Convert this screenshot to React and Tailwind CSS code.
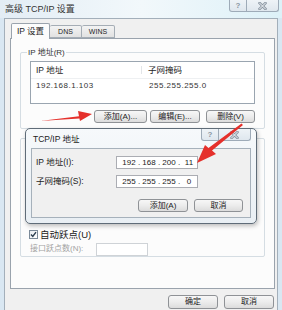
import React from "react";

const FONT = "font-['Liberation_Sans','Noto_Sans_CJK_SC',sans-serif]";

function Btn({ children, className = "" }) {
  return (
    <div
      className={`flex items-center justify-center rounded-[3px] border border-[#8f9296] bg-gradient-to-b from-[#f7f7f7] via-[#ececec] to-[#dcdcdc] text-[8px] leading-none text-[#222] ${className}`}
    >
      {children}
    </div>
  );
}

function CaptionButtons() {
  return (
    <div className="flex h-[12px]">
      <div className="flex w-[18px] items-center justify-center rounded-bl-[3px] border border-t-0 border-[#9eabb8] bg-gradient-to-b from-[#eef3f7] to-[#dfe7ee] text-[8px] font-bold leading-none text-[#8a96a2]">
        ?
      </div>
      <div className="flex w-[32px] items-center justify-center rounded-br-[3px] border border-l-0 border-t-0 border-[#9eabb8] bg-gradient-to-b from-[#eef3f7] to-[#dfe7ee]">
        <svg width="9" height="8" viewBox="0 0 9 8">
          <path d="M1.5 1 L7.5 7 M7.5 1 L1.5 7" stroke="#8a96a2" strokeWidth="2.6" strokeLinecap="square" />
          <path d="M1.5 1 L7.5 7 M7.5 1 L1.5 7" stroke="#f4f7fa" strokeWidth="1" strokeLinecap="square" />
        </svg>
      </div>
    </div>
  );
}

function GroupBox({ label, className = "", children }) {
  return (
    <div className={`relative border border-[#d5dde3] rounded-[2px] ${className}`}>
      {label && (
        <span className="absolute left-[6px] top-[-6px] bg-[#fcfcfc] px-[1px] text-[8px] leading-[11px] text-[#333]">
          {label}
        </span>
      )}
      {children}
    </div>
  );
}

function IpField({ parts }) {
  return (
    <div className="flex h-[13px] w-[82px] items-center border border-[#abadb3] bg-white pl-[5px] text-[8px] leading-none text-[#222]">
      {parts.map((p, i) => (
        <React.Fragment key={i}>
          {i > 0 && <span className="w-[6px] text-center">.</span>}
          <span className="w-[14px] text-center">{p}</span>
        </React.Fragment>
      ))}
    </div>
  );
}

export default function App() {
  return (
    <div className={`relative flex h-[310px] w-[282px] flex-col overflow-hidden bg-[#d9e7f2] ${FONT} text-[#1e1e1e]`}>
      {/* title bar */}
      <div className="flex h-[18px] items-start bg-gradient-to-r from-[#e3edf5] via-[#f2f8fb] to-[#ddf1f8]">
        <span className="pl-[5px] pt-[4px] text-[9px] leading-[10px] text-[#333]">高级 TCP/IP 设置</span>
        <div className="ml-auto mr-[3px]">
          <CaptionButtons />
        </div>
      </div>

      {/* body */}
      <div className="mx-[4px] flex flex-1 flex-col border-x border-t border-[#a3afba] bg-[#f0f0f0] pl-[5px] pr-[2px] pt-[3px]">
        {/* tabs */}
        <div className="flex h-[16px] items-end pl-[1px]">
          <div className="relative z-10 mb-[-1px] flex h-[16px] w-[39px] items-center justify-center rounded-t-[2px] border border-b-0 border-[#9aa3ad] bg-[#fcfcfc] text-[8.5px] leading-none">
            IP 设置
          </div>
          <div className="flex h-[13px] w-[32px] items-center justify-center rounded-t-[2px] border border-l-0 border-[#a5adb5] bg-gradient-to-b from-[#f3f3f3] to-[#e2e2e2] text-[7px] leading-none">
            DNS
          </div>
          <div className="flex h-[13px] w-[33px] items-center justify-center rounded-t-[2px] border border-l-0 border-[#a5adb5] bg-gradient-to-b from-[#f3f3f3] to-[#e2e2e2] text-[7px] leading-none">
            WINS
          </div>
        </div>

        {/* tab panel */}
        <div className="flex h-[251px] flex-col border border-[#9aa3ad] bg-[#fcfcfc] px-[9px] pt-[13px]">
          <GroupBox label="IP 地址(R)" className="h-[77px] px-[9px] pt-[8px]">
            <div className="h-[43px] border border-[#9aa5b0] bg-white">
              <div className="flex h-[17px] items-center border-b border-[#eef0f2] text-[8.5px] leading-none">
                <div className="w-[111px] border-r border-[#e2e5e8] pl-[5px]">IP 地址</div>
                <div className="pl-[6px]">子网掩码</div>
              </div>
              <div className="flex h-[13px] items-center text-[8px] leading-none tracking-[0.5px] text-[#333]">
                <div className="w-[111px] pl-[5px]">192.168.1.103</div>
                <div className="pl-[7px]">255.255.255.0</div>
              </div>
            </div>
            <div className="mt-[6px] flex justify-end">
              <Btn className="h-[13px] w-[53px]">添加(A)...</Btn>
              <Btn className="ml-[3px] h-[13px] w-[50px]">编辑(E)...</Btn>
              <Btn className="ml-[6px] h-[13px] w-[49px]">删除(V)</Btn>
            </div>
          </GroupBox>

          {/* gateway group, mostly covered by the dialog */}
          <GroupBox className="mt-[9px] flex h-[119px] flex-col px-[9px] pt-[8px]">
            <div className="h-[52px] border border-[#9aa5b0] bg-white" />
            <div className="h-[18px]" />
            <div className="mt-[13px] flex items-center">
              <div className="ml-[-1px] flex h-[9px] w-[9px] items-center justify-center border border-[#7b8a99] bg-gradient-to-br from-[#e8ecf0] to-white">
                <svg width="7" height="7" viewBox="0 0 7 7">
                  <path d="M1 3.6 L2.8 5.5 L6 1.2" fill="none" stroke="#2c3e50" strokeWidth="1.4" />
                </svg>
              </div>
              <span className="ml-[2px] text-[9.5px] leading-none text-[#222]">自动跃点(U)</span>
            </div>
            <div className="mt-[3px] flex items-center">
              <span className="w-[66px] text-[8px] leading-none text-[#a3a3a3]">接口跃点数(N):</span>
              <div className="h-[13px] w-[52px] border border-[#cfd3d7] bg-white" />
            </div>
          </GroupBox>
        </div>

        {/* bottom buttons */}
        <div className="mt-[6px] flex justify-end pr-[1px]">
          <Btn className="h-[14px] w-[50px] text-[8.5px]">确定</Btn>
          <Btn className="ml-[6px] h-[14px] w-[50px] text-[8.5px]">取消</Btn>
        </div>
      </div>

      {/* sub dialog */}
      <div className="absolute left-[25px] top-[128px] flex h-[96px] w-[232px] flex-col rounded-[5px] border border-[#5f6c78] bg-gradient-to-b from-[#f6f9fb] to-[#e9eff4] shadow-[1px_2px_4px_rgba(0,0,0,0.25)]">
        <div className="flex h-[19px] items-start">
          <span className="pl-[7px] pt-[5px] text-[8.5px] leading-[10px] text-[#222]">TCP/IP 地址</span>
          <div className="ml-auto mr-[5px]">
            <CaptionButtons />
          </div>
        </div>
        <div className="mx-[5px] mb-[5px] flex flex-1 flex-col border border-[#a6b1bb] bg-[#f0f0f0] pl-[4px] pr-[7px] pt-[7px]">
          <div className="flex items-center">
            <span className="w-[80px] text-[8.5px] leading-none">IP 地址(I):</span>
            <IpField parts={["192", "168", "200", "11"]} />
          </div>
          <div className="mt-[6px] flex items-center">
            <span className="w-[80px] text-[8.5px] leading-none">子网掩码(S):</span>
            <IpField parts={["255", "255", "255", "0"]} />
          </div>
          <div className="mt-[11px] flex justify-end">
            <Btn className="h-[13px] w-[50px]">添加(A)</Btn>
            <Btn className="ml-[6px] h-[13px] w-[49px]">取消</Btn>
          </div>
        </div>
      </div>

      {/* red arrows */}
      <svg className="pointer-events-none absolute left-0 top-0" width="282" height="310" viewBox="0 0 282 310">
        <path d="M40 121 L79 116.2 L78 111 L92 114 L80 121 L79.4 118.4 Z" fill="#e5302b" />
        <path d="M243 125 L212 150.5 L216 154 L197 163 L205 145 L208.5 148 L241.5 123.6 Z" fill="#e5302b" />
      </svg>
    </div>
  );
}
